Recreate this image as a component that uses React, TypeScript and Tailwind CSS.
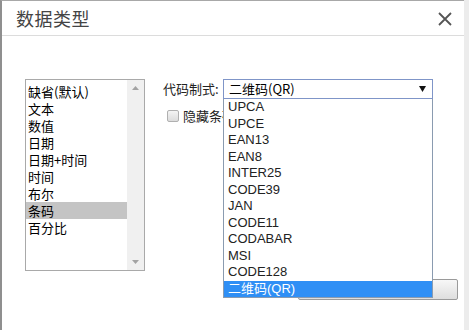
const leftItems = ['缺省(默认)', '文本', '数值', '日期', '日期+时间', '时间', '布尔', '条码', '百分比'];
const codeItems = ['UPCA', 'UPCE', 'EAN13', 'EAN8', 'INTER25', 'CODE39', 'JAN', 'CODE11', 'CODABAR', 'MSI', 'CODE128', '二维码(QR)'];

const cjk = { fontFamily: '"Noto Sans CJK SC", "Noto Sans", sans-serif' };
const latin = { fontFamily: 'Arial, "Liberation Sans", "Noto Sans CJK SC", sans-serif' };

export default function App() {
  return (
    <div className="w-[469px] h-[330px] bg-[#ececec] overflow-hidden flex" style={cjk}>
      {/* 对话框 */}
      <div className="w-[464px] h-full bg-white border-l-2 border-t border-l-[#8f8f8f] border-t-[#a8a8a8] flex flex-col">
        {/* 标题栏 */}
        <div className="h-[35px] shrink-0 border-b border-[#dcdcdc] flex items-center justify-between pl-[14px] pr-[12px]">
          <span className="text-[18px] leading-none text-[#444] tracking-[0.5px]">数据类型</span>
          <svg width="14" height="14" viewBox="0 0 14 14" className="mt-[1px]">
            <path d="M1 1 L13 13 M13 1 L1 13" stroke="#555" strokeWidth="1.8" />
          </svg>
        </div>

        {/* 内容 */}
        <div className="flex pl-[23px] pt-[43px]">
          {/* 类型列表 */}
          <div className="w-[120px] h-[192px] border border-[#a9a9a9] flex">
            <ul className="flex-1 pt-[3px] text-[13px] leading-[17px] text-black">
              {leftItems.map((item) => (
                <li key={item} className={`pl-[2px] h-[17px] ${item === '条码' ? 'bg-[#c4c4c4]' : ''}`}>
                  {item}
                </li>
              ))}
            </ul>
            <div className="w-[17px] bg-[#f0f0f0] flex flex-col items-center justify-between py-[6px]">
              <svg width="7" height="4" viewBox="0 0 7 4"><path d="M0 4 L3.5 0 L7 4 Z" fill="#a3a3a3" /></svg>
              <svg width="7" height="4" viewBox="0 0 7 4"><path d="M0 0 L3.5 4 L7 0 Z" fill="#a3a3a3" /></svg>
            </div>
          </div>

          {/* 右侧设置 */}
          <div className="ml-[18px] w-[295px] flex flex-col">
            <div className="flex items-center h-[20px]">
              <span className="text-[13px] text-[#222] w-[60px]">代码制式:</span>
              <div className="relative w-[210px] h-[20px]">
                <div className="h-full border border-[#7f95c8] flex items-center justify-between pl-[5px] pr-[6px] text-[13px] text-black">
                  <span>二维码(QR)</span>
                  <svg width="7" height="6" viewBox="0 0 7 6"><path d="M0 0 L7 0 L3.5 6 Z" fill="#111" /></svg>
                </div>
                {/* 下拉列表 */}
                <ul className="absolute z-10 left-0 top-full w-[210px] bg-white border border-t-0 border-[#8a9bb0] text-[13px] leading-[16.5px] text-[#222]" style={latin}>
                  {codeItems.map((item) => (
                    <li
                      key={item}
                      className={`h-[16.5px] pl-[4px] ${item === '二维码(QR)' ? 'bg-[#2f8ff5] text-white' : ''}`}
                    >
                      {item}
                    </li>
                  ))}
                </ul>
              </div>
            </div>

            <label className="flex items-center mt-[7px] ml-[4px] text-[13px] text-[#222]">
              <span className="w-[12px] h-[12px] border border-[#b0b0b0] rounded-[2px] bg-gradient-to-b from-[#f4f4f4] to-[#dcdcdc]" />
              <span className="ml-[4px]">隐藏条码</span>
            </label>

            <button className="self-end mt-[153px] w-[160px] h-[21px] border border-[#9a9a9a] rounded-[2px] bg-gradient-to-b from-[#f7f7f7] to-[#dedede]" />
          </div>
        </div>
      </div>
    </div>
  );
}
